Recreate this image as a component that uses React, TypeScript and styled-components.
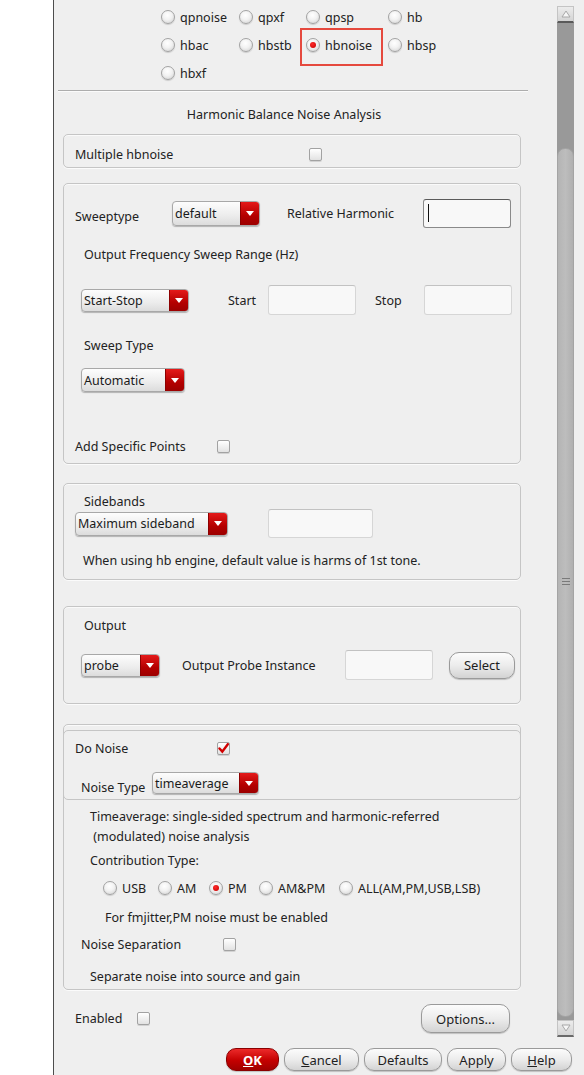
import React from "react";
import styled, { createGlobalStyle, css } from "styled-components";

const Global = createGlobalStyle`
  html, body { margin: 0; padding: 0; background: #ffffff; }
  body {
    font-family: "Noto Sans", "Open Sans", "DejaVu Sans", sans-serif;
    font-size: 12.5px;
    color: #222;
  }
  * { box-sizing: border-box; }
`;

const Screen = styled.div`
  width: 584px;
  height: 1075px;
  display: flex;
  background: #fff;
  overflow: hidden;
`;

const Window = styled.div`
  margin-left: 53px;
  flex: 1;
  display: flex;
  flex-direction: column;
  border-left: 1px solid #4d4d4d;
  background: #efefef;
`;

const ScrollRow = styled.div`
  display: flex;
  height: 1040px;
`;

const Content = styled.div`
  width: 503px;
  display: flex;
  flex-direction: column;
`;

/* ---------- analysis radio grid ---------- */
const RadioGrid = styled.div`
  display: grid;
  grid-template-columns: 78px 67px 82px auto;
  grid-auto-rows: 28px;
  padding: 3px 0 0 107px;
`;

const RadioItem = styled.label<{ $w?: number }>`
  position: relative;
  display: flex;
  align-items: center;
  gap: 5px;
  white-space: nowrap;
  ${(p) => p.$w && css`width: ${p.$w}px;`}
`;

const RadioCircle = styled.span<{ $on?: boolean }>`
  width: 14px;
  height: 14px;
  flex: none;
  border-radius: 50%;
  border: 1px solid #a3a3a3;
  background: radial-gradient(circle at 45% 35%, #ffffff 0%, #f2f2f2 45%, #cfcfcf 100%);
  box-shadow: 0 1px 1px rgba(0, 0, 0, 0.15);
  display: flex;
  align-items: center;
  justify-content: center;
  &::after {
    content: "";
    display: ${(p) => (p.$on ? "block" : "none")};
    width: 6px;
    height: 6px;
    border-radius: 50%;
    background: radial-gradient(circle at 40% 35%, #ff2a2a, #c40000);
  }
`;

const Highlight = styled.span`
  position: absolute;
  left: -6px;
  top: -3px;
  width: 83px;
  height: 38px;
  border: 2px solid #e5493e;
  pointer-events: none;
`;

const Separator = styled.div`
  margin: 3px 0 0 4px;
  width: 470px;
  height: 2px;
  border-top: 1px solid #adadad;
  border-bottom: 1px solid #fbfbfb;
`;

const Title = styled.div`
  margin: 13px 0 0 9px;
  width: 458px;
  padding-right: 16px;
  height: 20px;
  line-height: 20px;
  text-align: center;
`;

/* ---------- group boxes ---------- */
const Group = styled.div<{ $mt: number; $pb: number }>`
  margin: ${(p) => p.$mt}px 0 0 9px;
  width: 458px;
  border: 1px solid #c5c5c5;
  border-radius: 5px;
  padding-bottom: ${(p) => p.$pb}px;
  display: flex;
  flex-direction: column;
  box-shadow: inset 0 1px 0 #fafafa, 0 1px 0 #fbfbfb;
`;

const HeaderBox = styled.div`
  margin: 5px -1px 0;
  border: 1px solid #c5c5c5;
  border-radius: 5px;
  padding-bottom: 5px;
  display: flex;
  flex-direction: column;
`;

const Row = styled.div<{ $mt?: number; $h: number; $pl?: number; $pr?: number }>`
  display: flex;
  align-items: center;
  margin-top: ${(p) => p.$mt ?? 0}px;
  height: ${(p) => p.$h}px;
  padding-left: ${(p) => p.$pl ?? 0}px;
  padding-right: ${(p) => p.$pr ?? 0}px;
  white-space: nowrap;
`;

const TextBlock = styled.div<{ $mt: number; $pl: number }>`
  margin-top: ${(p) => p.$mt}px;
  padding-left: ${(p) => p.$pl}px;
  line-height: 20px;
`;

const Label = styled.span<{ $w?: number; $ml?: number; $dy?: number }>`
  flex: none;
  white-space: nowrap;
  ${(p) => p.$w !== undefined && css`width: ${p.$w}px;`}
  margin-left: ${(p) => p.$ml ?? 0}px;
  position: relative;
  top: ${(p) => p.$dy ?? 0}px;
`;

/* ---------- controls ---------- */
const ComboBox = styled.div<{ $w: number; $h: number; $ml?: number }>`
  flex: none;
  width: ${(p) => p.$w}px;
  height: ${(p) => p.$h}px;
  margin-left: ${(p) => p.$ml ?? 0}px;
  display: flex;
  border: 1px solid #a8a8a8;
  border-radius: 4px;
  overflow: hidden;
  background: linear-gradient(#fdfdfd, #ececec 60%, #dcdcdc);
  box-shadow: 0 1px 1px rgba(0, 0, 0, 0.25);
`;

const ComboText = styled.span`
  flex: 1;
  padding: 0 0 0 2px;
  display: flex;
  align-items: center;
  color: #1a1a1a;
  font-size: 12.5px;
`;

const ComboArrow = styled.span`
  width: 19px;
  flex: none;
  display: flex;
  align-items: center;
  justify-content: center;
  background: linear-gradient(#e41a1a, #b40000 60%, #9c0000);
  border-left: 1px solid #8c0000;
`;

const Input = styled.div<{ $w: number; $h: number; $ml?: string; $focus?: boolean }>`
  flex: none;
  width: ${(p) => p.$w}px;
  height: ${(p) => p.$h}px;
  margin-left: ${(p) => p.$ml ?? "0"};
  background: #f8f8f8;
  border: 1px solid ${(p) => (p.$focus ? "#8a8a8a" : "#d6d6d6")};
  border-top-color: ${(p) => (p.$focus ? "#5a5a5a" : "#c2c2c2")};
  border-radius: 3px;
  display: flex;
  align-items: center;
  padding-left: 4px;
`;

const Caret = styled.span`
  width: 1px;
  height: 18px;
  background: #111;
`;

const Check = styled.span<{ $ml?: number }>`
  flex: none;
  width: 13px;
  height: 13px;
  margin-left: ${(p) => p.$ml ?? 0}px;
  border: 1px solid #a2a2a2;
  border-radius: 2px;
  background: linear-gradient(#ffffff, #e2e2e2);
  box-shadow: 0 1px 0 rgba(0, 0, 0, 0.12);
  display: flex;
  align-items: center;
  justify-content: center;
`;

const Button = styled.button<{ $w: number; $h: number; $ml?: string; $mr?: number; $primary?: boolean }>`
  flex: none;
  width: ${(p) => p.$w}px;
  height: ${(p) => p.$h}px;
  margin-left: ${(p) => p.$ml ?? "0"};
  margin-right: ${(p) => p.$mr ?? 0}px;
  padding: 0;
  font-family: inherit;
  font-size: 13px;
  color: #1e1e1e;
  border: 1px solid #9a9a9a;
  border-radius: 10px;
  background: linear-gradient(#fcfcfc, #ececec 50%, #d3d3d3);
  box-shadow: 0 1px 1px rgba(0, 0, 0, 0.2);
  ${(p) =>
    p.$primary &&
    css`
      color: #fff;
      font-weight: bold;
      border-color: #8a0000;
      background: linear-gradient(#ec2a2a, #c40000 55%, #a00000);
    `}
  u { text-decoration: underline; }
`;

/* ---------- scrollbar ---------- */
const ScrollBar = styled.div`
  width: 17px;
  margin: 6px 0 0 0;
  height: 1031px;
  display: flex;
  flex-direction: column;
`;

const ScrollArrow = styled.div<{ $down?: boolean }>`
  height: 17px;
  flex: none;
  display: flex;
  align-items: center;
  justify-content: center;
  background: linear-gradient(#ececec, #d4d4d4);
  border: 1px solid #c4c4c4;
  border-bottom: 2px solid ${(p) => (p.$down ? "#6a6a6a" : "#5a5a5a")};
`;

const Track = styled.div`
  flex: 1;
  display: flex;
  flex-direction: column;
  background: #999999;
  padding: 125px 0 3px;
`;

const Thumb = styled.div`
  flex: 1;
  border-radius: 8px;
  background: linear-gradient(90deg, #b4b4b4, #bdbdbd 50%, #b0b0b0);
  border: 1px solid #a4a4a4;
  display: flex;
  align-items: center;
  justify-content: center;
`;

const Grip = styled.div`
  width: 8px;
  height: 9px;
  background: repeating-linear-gradient(#7a7a7a 0 1px, transparent 1px 3px);
`;

const ButtonBar = styled.div`
  flex: 1;
  display: flex;
  justify-content: flex-end;
  align-items: flex-start;
  gap: 5px;
  padding: 8px 12px 0 0;
`;

/* ---------- small parts ---------- */
const Combo = ({ w, h, text, ml }: { w: number; h: number; text: string; ml?: number }) => (
  <ComboBox $w={w} $h={h} $ml={ml}>
    <ComboText>{text}</ComboText>
    <ComboArrow>
      <svg width="8" height="5" viewBox="0 0 8 5">
        <polygon points="0,0 8,0 4,5" fill="#fff" />
      </svg>
    </ComboArrow>
  </ComboBox>
);

const CheckMark = () => (
  <svg width="11" height="11" viewBox="0 0 11 11">
    <path d="M1.5 5.5 L4.3 8.6 L9.8 1.2" stroke="#d10000" strokeWidth="2.4" fill="none" strokeLinecap="round" />
  </svg>
);

const Radio = ({ label, on, w, mark }: { label: string; on?: boolean; w?: number; mark?: boolean }) => (
  <RadioItem $w={w}>
    <RadioCircle $on={on} />
    <span>{label}</span>
    {mark && <Highlight />}
  </RadioItem>
);

const Triangle = ({ down }: { down?: boolean }) => (
  <svg width="10" height="8" viewBox="0 0 10 8">
    <polygon
      points={down ? "1,1 9,1 5,7" : "1,7 9,7 5,1"}
      fill="#f6f6f6"
      stroke="#a8a8a8"
      strokeWidth="1"
    />
  </svg>
);

export default function App() {
  return (
    <Screen>
      <Global />
      <Window>
        <ScrollRow>
          <Content>
            <RadioGrid>
              <Radio label="qpnoise" />
              <Radio label="qpxf" />
              <Radio label="qpsp" />
              <Radio label="hb" />
              <Radio label="hbac" />
              <Radio label="hbstb" />
              <Radio label="hbnoise" on mark />
              <Radio label="hbsp" />
              <Radio label="hbxf" />
            </RadioGrid>
            <Separator />
            <Title>Harmonic Balance Noise Analysis</Title>

            <Group $mt={9} $pb={4}>
              <Row $mt={10} $h={18} $pl={11}>
                <Label $w={234}>Multiple hbnoise</Label>
                <Check />
              </Row>
            </Group>

            <Group $mt={15} $pb={8}>
              <Row $mt={14} $h={30} $pl={11} $pr={9}>
                <Label $w={97} $dy={3}>Sweeptype</Label>
                <Combo w={88} h={25} text="default" />
                <Label $ml={27}>Relative Harmonic</Label>
                <Input $w={88} $h={29} $ml="auto" $focus>
                  <Caret />
                </Input>
              </Row>
              <Row $mt={16} $h={20} $pl={20}>
                <Label>Output Frequency Sweep Range (Hz)</Label>
              </Row>
              <Row $mt={20} $h={32} $pl={17}>
                <Combo w={108} h={23} text="Start-Stop" />
                <Label $ml={39} $w={40}>Start</Label>
                <Input $w={88} $h={30} />
                <Label $ml={19} $w={49}>Stop</Label>
                <Input $w={88} $h={30} />
              </Row>
              <Row $mt={19} $h={20} $pl={20}>
                <Label>Sweep Type</Label>
              </Row>
              <Row $mt={13} $h={24} $pl={17}>
                <Combo w={104} h={24} text="Automatic" />
              </Row>
              <Row $mt={45} $h={18} $pl={11}>
                <Label $w={142}>Add Specific Points</Label>
                <Check />
              </Row>
            </Group>

            <Group $mt={19} $pb={9}>
              <Row $mt={9} $h={16} $pl={20}>
                <Label>Sidebands</Label>
              </Row>
              <Row $h={29} $pl={11}>
                <Combo w={153} h={24} text="Maximum sideband" />
                <Input $w={105} $h={29} $ml="40px" />
              </Row>
              <Row $mt={12} $h={20} $pl={19}>
                <Label>When using hb engine, default value is harms of 1st tone.</Label>
              </Row>
            </Group>

            <Group $mt={26} $pb={23}>
              <Row $mt={8} $h={20} $pl={20}>
                <Label>Output</Label>
              </Row>
              <Row $mt={15} $h={30} $pl={17}>
                <Combo w={79} h={23} text="probe" />
                <Label $ml={22} $w={163}>Output Probe Instance</Label>
                <Input $w={88} $h={30} />
                <Button $w={66} $h={27} $ml="16px">Select</Button>
              </Row>
            </Group>

            <Group $mt={20} $pb={3}>
              <HeaderBox>
                <Row $mt={8} $h={18} $pl={11}>
                  <Label $w={142}>Do Noise</Label>
                  <Check>
                    <CheckMark />
                  </Check>
                </Row>
                <Row $mt={15} $h={22} $pl={17}>
                  <Label $w={71} $dy={4}>Noise Type</Label>
                  <Combo w={107} h={22} text="timeaverage" />
                </Row>
              </HeaderBox>
              <TextBlock $mt={7} $pl={26}>
                Timeaverage: single-sided spectrum and harmonic-referred
                <br />
                &nbsp;(modulated) noise analysis
              </TextBlock>
              <Row $mt={3} $h={20} $pl={26}>
                <Label>Contribution Type:</Label>
              </Row>
              <Row $mt={9} $h={18} $pl={39}>
                <Radio label="USB" w={55} />
                <Radio label="AM" w={51} />
                <Radio label="PM" on w={50} />
                <Radio label="AM&PM" w={80} />
                <Radio label="ALL(AM,PM,USB,LSB)" />
              </Row>
              <Row $mt={10} $h={20} $pl={41}>
                <Label>For fmjitter,PM noise must be enabled</Label>
              </Row>
              <Row $mt={8} $h={18} $pl={17}>
                <Label $w={142}>Noise Separation</Label>
                <Check />
              </Row>
              <Row $mt={13} $h={20} $pl={26}>
                <Label>Separate noise into source and gain</Label>
              </Row>
            </Group>

            <Row $mt={14} $h={29} $pl={21}>
              <Label $w={62}>Enabled</Label>
              <Check />
              <Button $w={89} $h={29} $ml="auto" $mr={47}>Options...</Button>
            </Row>
          </Content>

          <ScrollBar>
            <ScrollArrow>
              <Triangle />
            </ScrollArrow>
            <Track>
              <Thumb>
                <Grip />
              </Thumb>
            </Track>
            <ScrollArrow $down>
              <Triangle down />
            </ScrollArrow>
          </ScrollBar>
        </ScrollRow>

        <ButtonBar>
          <Button $w={53} $h={23} $primary>
            <u>O</u>K
          </Button>
          <Button $w={75} $h={23}>
            <u>C</u>ancel
          </Button>
          <Button $w={78} $h={23}>Defaults</Button>
          <Button $w={59} $h={23}>Apply</Button>
          <Button $w={61} $h={23}>
            <u>H</u>elp
          </Button>
        </ButtonBar>
      </Window>
    </Screen>
  );
}
